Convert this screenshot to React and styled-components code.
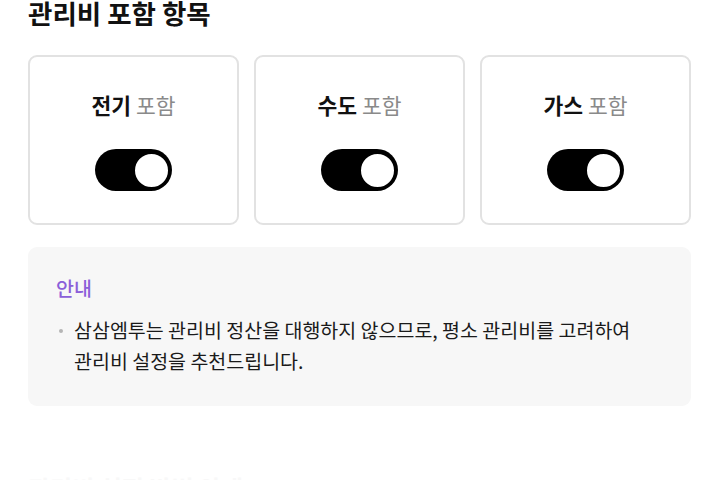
import React from 'react';
import styled, { createGlobalStyle } from 'styled-components';

const GlobalStyle = createGlobalStyle`
    body {
        margin: 0;
        background: #fff;
        font-family: "Noto Sans CJK KR", "Noto Sans", sans-serif;
        color: #111;
    }
`;

const Page = styled.main`
    padding: 0 29px 0 28px;
    overflow: hidden;
    height: 480px;
`;

const Title = styled.h2`
    margin: -6px 0 0;
    font-size: 26.5px;
    font-weight: 700;
    line-height: 38px;
`;

const CardRow = styled.div`
    display: grid;
    grid-template-columns: repeat(3, 1fr);
    gap: 15px;
    margin-top: 23px;
`;

const Card = styled.div`
    height: 170px;
    box-sizing: border-box;
    border: 2px solid #e2e2e2;
    border-radius: 9px;
    display: flex;
    flex-direction: column;
    align-items: center;
    padding-top: 32px;
`;

const Label = styled.div`
    font-size: 21.5px;
    line-height: 32px;
    font-weight: 700;

    span {
        font-weight: 400;
        color: #8a8a8a;
    }
`;

const Toggle = styled.div`
    margin-top: 28px;
    width: 77px;
    height: 42px;
    border-radius: 21px;
    background: ${p => (p.$on ? '#000' : '#ccc')};
    display: flex;
    align-items: center;
    justify-content: ${p => (p.$on ? 'flex-end' : 'flex-start')};
    padding: 0 1px;
    box-sizing: border-box;
`;

const Knob = styled.div`
    width: 39px;
    height: 39px;
    border-radius: 50%;
    background: #fff;
    border: 3px solid #000;
    box-sizing: border-box;
`;

const Notice = styled.section`
    margin-top: 22px;
    background: #f7f7f7;
    border-radius: 9px;
    padding: 25px 28px 30px;
`;

const NoticeTitle = styled.h3`
    margin: 0;
    color: #8b5fd9;
    font-size: 19.5px;
    font-weight: 500;
    line-height: 32px;
`;

const NoticeList = styled.ul`
    list-style: none;
    margin: 10px 0 0;
    padding: 0;
`;

const NoticeItem = styled.li`
    position: relative;
    padding-left: 18px;
    font-size: 19.5px;
    line-height: 31px;
    color: #1a1a1a;

    &::before {
        content: '';
        position: absolute;
        left: 3px;
        top: 15px;
        width: 4px;
        height: 4px;
        border-radius: 50%;
        background: #b5b5b5;
    }
`;

const NextTitle = styled.h2`
    margin: 64px 0 0;
    font-size: 24px;
    font-weight: 700;
    color: #f8f8f8;
    line-height: 36px;
`;

const items = ['전기', '수도', '가스'];

export default function App() {
    return (
        <>
            <GlobalStyle />
            <Page>
                <Title>관리비 포함 항목</Title>
                <CardRow>
                    {items.map(name => (
                        <Card key={name}>
                            <Label>
                                {name} <span>포함</span>
                            </Label>
                            <Toggle $on>
                                <Knob />
                            </Toggle>
                        </Card>
                    ))}
                </CardRow>
                <Notice>
                    <NoticeTitle>안내</NoticeTitle>
                    <NoticeList>
                        <NoticeItem>
                            삼삼엠투는 관리비 정산을 대행하지 않으므로, 평소 관리비를 고려하여
                            <br />
                            관리비 설정을 추천드립니다.
                        </NoticeItem>
                    </NoticeList>
                </Notice>
                <NextTitle>관리비 설정 방법 안내</NextTitle>
            </Page>
        </>
    );
}
